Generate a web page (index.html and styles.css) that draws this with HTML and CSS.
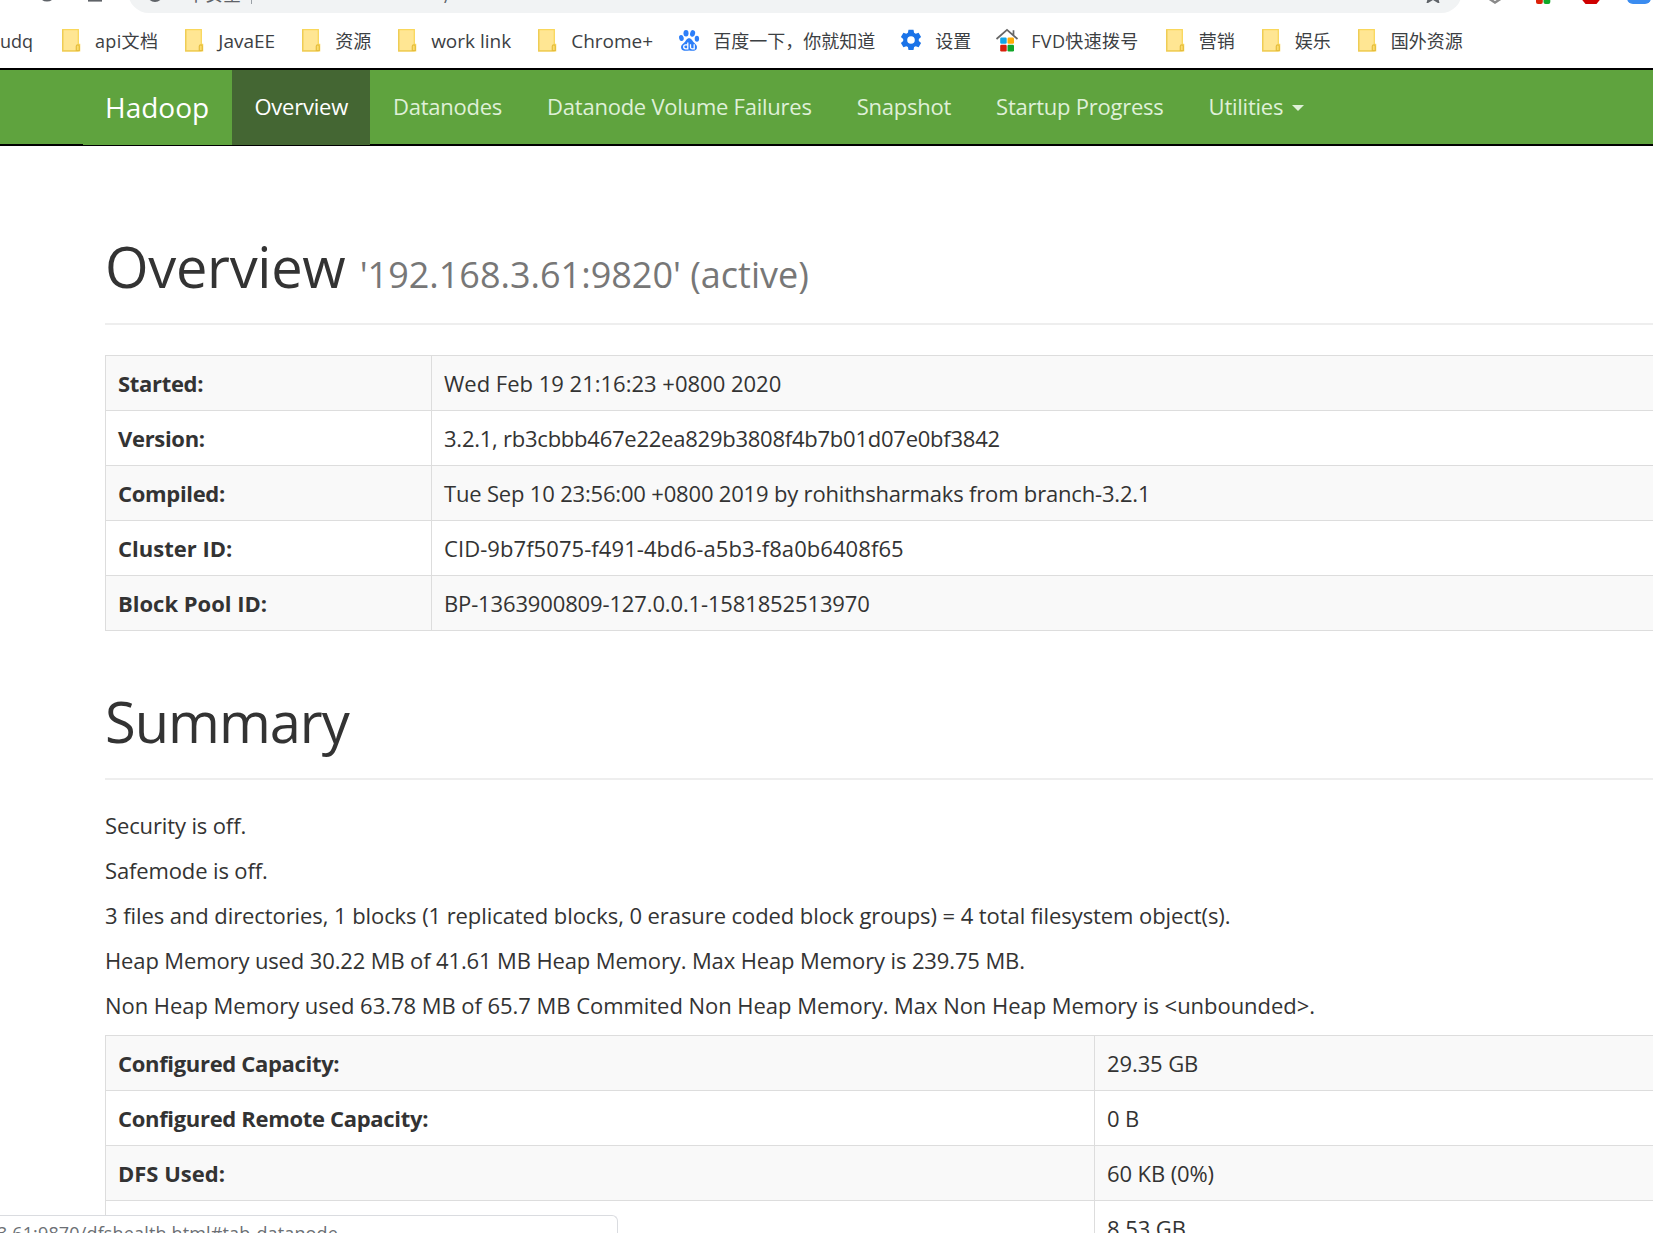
FILE: index.html
```
<!DOCTYPE html>
<html lang="en">
<head>
    <meta charset="UTF-8">
    <title>Namenode information</title>
    <link rel="stylesheet" href="styles.css">
</head>
<body>
    <svg class="sprite" width="0" height="0">
        <symbol id="folder" viewBox="0 0 24 24">
            <path d="M3.7 1.7h15.6v14.8h1.3v6.3H3.7z" fill="#ffe693" stroke="#f9d75b" stroke-width="1.3"/>
            <path d="M3.7 1.7v21.1h16" fill="none" stroke="#edca55" stroke-width="1.2"/>
            <path d="M17.3 22.5v-4.2c0-2 3-2 3 0v4.2z" fill="#fbdc6d" stroke="#e5bd3d" stroke-width="1.2"/>
        </symbol>
    </svg>

    <!-- Browser toolbar -->
    <div class="toolbar">
        <svg class="toolbar-left" viewBox="0 0 128 13">
            <path d="M41 -3a7 7 0 0 0 12 0" fill="none" stroke="#5f6368" stroke-width="2.4"/>
            <path d="M88 0h14v1.6h-14z" fill="#5f6368"/>
        </svg>
        <div class="omnibox">
            <svg class="info" viewBox="0 0 18 18"><circle cx="9" cy="9" r="7"/></svg>
            <span class="insecure">不安全</span>
            <span class="divider"></span>
            <span class="url">/</span>
            <svg class="star" viewBox="0 0 18 18"><path d="M9 1l2.3 5.6 6 .5-4.6 4 1.5 5.9L9 13.800 3.800 17l1.500-5.900-4.600-4 6-.5z"/></svg>
        </div>
        <svg class="toolbar-right" viewBox="1462 0 191 13">
            <path d="M1488 -2l7 4.500 7-4.500" fill="none" stroke="#8a8a8a" stroke-width="2.400"/>
            <rect x="1536" y="-4" width="6.800" height="8" rx="2" fill="#dc2209"/>
            <rect x="1543.500" y="-4" width="6.800" height="8" rx="2" fill="#10a928"/>
            <path d="M1579 -4h24l-6.500 8h-11z" fill="#cf0000"/>
            <rect x="1627" y="-12" width="24" height="16" rx="6" fill="#3a8cf0"/>
        </svg>
    </div>

    <!-- Bookmarks -->
    <div class="bookmarks">
        <a class="bookmark first"><span>udq</span></a>
        <a class="bookmark"><svg><use href="#folder"/></svg><span class="mixed">api文档</span></a>
        <a class="bookmark"><svg><use href="#folder"/></svg><span class="latin">JavaEE</span></a>
        <a class="bookmark"><svg><use href="#folder"/></svg><span>资源</span></a>
        <a class="bookmark"><svg><use href="#folder"/></svg><span class="latin">work link</span></a>
        <a class="bookmark"><svg><use href="#folder"/></svg><span class="latin">Chrome+</span></a>
        <a class="bookmark">
            <svg viewBox="0 0 24 24" fill="#2d7ff9">
                <ellipse cx="9" cy="5.200" rx="2.500" ry="3.300"/>
                <ellipse cx="15.600" cy="5.400" rx="2.500" ry="3.300" transform="rotate(12 15.600 5.400)"/>
                <ellipse cx="4.400" cy="10" rx="2.300" ry="3" transform="rotate(-12 4.400 10)"/>
                <ellipse cx="19.900" cy="10.800" rx="2.200" ry="3"/>
                <path d="M12 10.200c2.500 0 3.400 2.600 5 4.300 2 2 3.600 3.600 2.800 6-.8 2.800-4.300 2.400-7.600 2-3.300.4-7 .9-7.900-2-.8-2.700 1.100-4.100 3-5.900 1.600-1.600 2.300-4.400 4.700-4.400z"/>
                <path d="M10.800 14.500v6.300H8.700a2 2 0 1 1 0-4h2.100M13.500 16.300v3c0 1 .5 1.500 1.500 1.500h2.200v-4.500" fill="none" stroke="#fff" stroke-width="1.300"/>
            </svg>
            <span>百度一下，你就知道</span>
        </a>
        <a class="bookmark">
            <svg viewBox="0 0 24 24" fill="#1a73e8">
                <path fill-rule="evenodd" d="M9.500 1.800h5l.6 3 1.600.9 2.900-1 2.500 4.200-2.300 2v2l2.300 2-2.500 4.300-2.900-1-1.600.9-.6 3h-5l-.6-3-1.600-.9-2.900 1-2.500-4.300 2.300-2v-2l-2.300-2 2.500-4.200 2.900 1 1.600-.9zM12 8.200a3.800 3.800 0 1 0 0 7.600 3.800 3.800 0 0 0 0-7.600z"/>
            </svg>
            <span>设置</span>
        </a>
        <a class="bookmark">
            <svg viewBox="0 0 24 24">
                <path d="M1.500 11L12 1.800 22.500 11M18.500 7V2.200" fill="none" stroke="#666" stroke-width="1.700"/>
                <rect x="5.200" y="9.500" width="6.500" height="6.200" rx="1.200" fill="#12a5e5"/>
                <rect x="12.500" y="9.500" width="6.500" height="6.200" rx="1.200" fill="#ffab05"/>
                <rect x="5.200" y="16.800" width="6.500" height="6.700" rx="1.200" fill="#d81f0b"/>
                <rect x="12.500" y="16.800" width="6.500" height="6.700" rx="1.200" fill="#10a629"/>
            </svg>
            <span class="mixed">FVD快速拨号</span>
        </a>
        <a class="bookmark"><svg><use href="#folder"/></svg><span>营销</span></a>
        <a class="bookmark"><svg><use href="#folder"/></svg><span>娱乐</span></a>
        <a class="bookmark"><svg><use href="#folder"/></svg><span>国外资源</span></a>
    </div>

    <header class="navbar">
        <a class="brand">Hadoop</a>
        <nav class="nav">
            <a class="active">Overview</a>
            <a>Datanodes</a>
            <a>Datanode Volume Failures</a>
            <a>Snapshot</a>
            <a>Startup Progress</a>
            <a>Utilities<i class="caret"></i></a>
        </nav>
    </header>

    <main class="container">
        <h1 class="page-header">Overview <small>'192.168.3.61:9820' (active)</small></h1>
        <table class="table overview">
            <tr><th class="tight">Started:</th><td>Wed Feb 19 21:16:23 +0800 2020</td></tr>
            <tr><th class="tight">Version:</th><td class="version">3.2.1, rb3cbbb467e22ea829b3808f4b7b01d07e0bf3842</td></tr>
            <tr><th class="tight">Compiled:</th><td class="compiled">Tue Sep 10 23:56:00 +0800 2019 by rohithsharmaks from branch-3.2.1</td></tr>
            <tr><th>Cluster ID:</th><td class="cluster">CID-9b7f5075-f491-4bd6-a5b3-f8a0b6408f65</td></tr>
            <tr><th>Block Pool ID:</th><td class="pool">BP-1363900809-127.0.0.1-1581852513970</td></tr>
        </table>

        <h1 class="page-header title-summary">Summary</h1>
        <p>Security is off.</p>
        <p>Safemode is off.</p>
        <p class="files">3 files and directories, 1 blocks (1 replicated blocks, 0 erasure coded block groups) = 4 total filesystem object(s).</p>
        <p>Heap Memory used 30.22 MB of 41.61 MB Heap Memory. Max Heap Memory is 239.75 MB.</p>
        <p class="non-heap">Non Heap Memory used 63.78 MB of 65.7 MB Commited Non Heap Memory. Max Non Heap Memory is &lt;unbounded&gt;.</p>
        <table class="table summary">
            <tr><th class="tight">Configured Capacity:</th><td>29.35 GB</td></tr>
            <tr><th class="tight">Configured Remote Capacity:</th><td>0 B</td></tr>
            <tr><th>DFS Used:</th><td>60 KB (0%)</td></tr>
            <tr><th></th><td>8.53 GB</td></tr>
        </table>
    </main>

    <!-- Link preview -->
    <div class="status"><span>3.61:9870/dfshealth.html#tab-datanode</span></div>
</body>
</html>
```
FILE: styles.css
```
* {
    box-sizing: border-box;
}

body {
    margin: 0;
    height: 1233px;
    overflow: hidden;
    background-color: #fff;
    color: #333;
    font-family: "Open Sans", "Noto Sans CJK SC", sans-serif;
    font-size: 22px;
    line-height: 30px;
    white-space: nowrap;
}

.sprite {
    display: block;
}

/* Browser toolbar */
.toolbar {
    display: flex;
    align-items: flex-end;
    height: 13px;
    overflow: hidden;
}

.toolbar-left {
    flex: none;
    width: 128px;
    height: 13px;
}

.toolbar-right {
    flex: none;
    width: 191px;
    height: 13px;
}

.omnibox {
    display: flex;
    align-items: center;
    flex: none;
    width: 1334px;
    height: 42px;
    padding: 0 20px 0 18px;
    border-radius: 21px;
    background-color: #f1f3f4;
    color: #5f6368;
    font-size: 18px;
}

.info, .star {
    width: 18px;
    height: 18px;
    fill: none;
    stroke: #5f6368;
    stroke-width: 2;
    margin-bottom: -4px;
}

.insecure {
    margin: 0 10px -4px 23px;
}

.divider {
    width: 1px;
    height: 24px;
    background-color: #9aa0a6;
}

.url {
    margin: 8px 0 0 192px;
}

.star {
    margin-left: auto;
}

/* Bookmarks */
.bookmarks {
    display: flex;
    align-items: center;
    gap: 24px;
    height: 55px;
    padding-bottom: 2px;
    color: #3c4043;
    font-size: 18px;
}

.bookmark {
    display: flex;
    align-items: center;
    gap: 12px;
}

.bookmark.first {
    width: 35px;
}

.bookmark svg {
    width: 24px;
    height: 24px;
}

.bookmark span {
    padding-top: 2px;
}

.bookmark .latin {
    font-size: 19px;
}

.bookmark .mixed {
    letter-spacing: 0.35px;
}

/* Navbar */
.navbar {
    display: flex;
    height: 78px;
    padding-left: 83px;
    border-top: 2px solid #000;
    border-bottom: 2px solid #000;
    background-color: #5fa33e;
}

.brand {
    height: 75px;
    width: 149px;
    padding: 22px;
    background-color: #5fa33e;
    color: #fff;
    font-size: 28px;
}

.nav {
    display: flex;
    letter-spacing: -0.24px;
}

.nav a {
    display: flex;
    align-items: center;
    height: 75px;
    padding: 0 22.5px 3px;
    color: #dff0d8;
}

.nav .active {
    background-color: #446633;
    color: #fff;
}

.caret {
    margin: 4px 0 0 9px;
    border-top: 6px solid;
    border-left: 6px solid transparent;
    border-right: 6px solid transparent;
}

/* Page */
.container {
    padding-left: 105px;
    overflow: hidden;
}

.page-header {
    height: 89px;
    margin: 90px 0 30px;
    border-bottom: 2px solid #eee;
    font-size: 56px;
    font-weight: 400;
    line-height: 60px;
    letter-spacing: -0.3px;
}

.page-header small {
    color: #777;
    font-size: 36px;
    letter-spacing: 0;
}

.title-summary {
    margin-top: 60px;
    letter-spacing: -1px;
}

.table {
    width: 1700px;
    table-layout: fixed;
    border-collapse: collapse;
}

.table th, .table td {
    height: 55px;
    padding: 0 12px;
    border: 1px solid #ddd;
    text-align: left;
}

.table tr:nth-child(odd) {
    background-color: #f9f9f9;
}

.table .tight {
    letter-spacing: -0.32px;
}

.overview th {
    width: 326px;
}

.version {
    letter-spacing: -0.24px;
}

.compiled {
    letter-spacing: -0.18px;
}

.cluster {
    letter-spacing: 0.07px;
}

.pool {
    letter-spacing: -0.14px;
}

.summary th {
    width: 989px;
}

.summary td {
    letter-spacing: -0.1px;
}

p {
    margin: 0 0 15px;
    letter-spacing: -0.13px;
}

.files {
    letter-spacing: -0.08px;
}

.non-heap {
    letter-spacing: -0.04px;
}

/* Link preview */
.status {
    position: absolute;
    left: 0;
    bottom: 0;
    display: flex;
    justify-content: flex-end;
    width: 618px;
    height: 18px;
    padding: 2px 279px 0 0;
    overflow: hidden;
    border: solid #dadce0;
    border-width: 1px 1px 0 0;
    border-top-right-radius: 6px;
    background-color: #fff;
    color: #6b6f74;
    font-size: 18px;
    letter-spacing: 0.15px;
}
```
